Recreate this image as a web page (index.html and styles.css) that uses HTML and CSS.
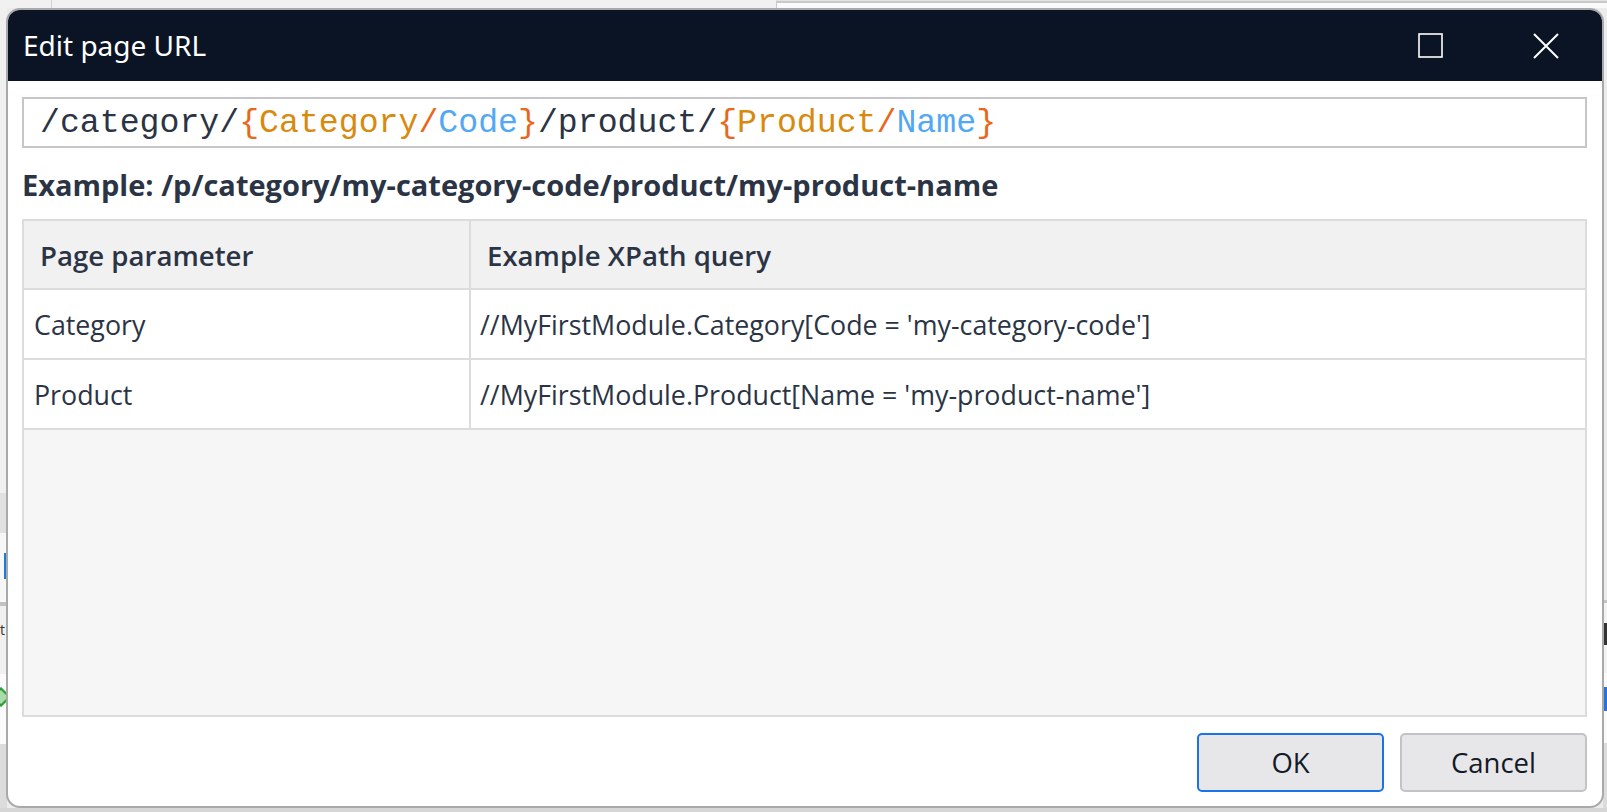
FILE: index.html
```html
<!DOCTYPE html>
<html>
<head>
<meta charset="utf-8">
<link rel="stylesheet" href="styles.css">
</head>
<body>
<div class="desktop">
  <div class="bg-top">
    <div class="bg-top-left"></div>
    <div class="bg-top-right"></div>
  </div>
  <div class="bg-mid">
    <div class="bg-left">
      <div class="seg s1"></div>
      <div class="seg s2"></div>
      <div class="seg s3"><span class="link-bit"></span></div>
      <div class="seg s4"></div>
      <div class="seg s5"><span class="t-bit">t</span></div>
      <div class="seg s6"><span class="green-bit"></span></div>
      <div class="seg s7"></div>
    </div>
    <div class="bg-center"></div>
    <div class="bg-right">
      <div class="seg r1"></div>
      <div class="seg r2"></div>
      <div class="seg r3"><span class="r-dark"></span></div>
      <div class="seg r4"><span class="r-blue"></span></div>
      <div class="seg r5"></div>
    </div>
  </div>
  <div class="bg-bottom"></div>

  <div class="dialog">
    <div class="titlebar">
      <div class="title">Edit page URL</div>
      <button class="tb-btn max" aria-label="Maximize">
        <svg width="25" height="25" viewBox="0 0 25 25"><rect x="1" y="1" width="23" height="23" fill="none" stroke="#fff" stroke-width="1.6"/></svg>
      </button>
      <button class="tb-btn close" aria-label="Close">
        <svg width="26" height="26" viewBox="0 0 26 26"><path d="M1 1 L25 25 M25 1 L1 25" stroke="#fff" stroke-width="2" fill="none"/></svg>
      </button>
    </div>
    <div class="content">
      <div class="url-input"><span class="c-plain">/category/</span><span class="c-brace">{</span><span class="c-ent">Category</span><span class="c-brace">/</span><span class="c-attr">Code</span><span class="c-brace">}</span><span class="c-plain">/product/</span><span class="c-brace">{</span><span class="c-ent">Product</span><span class="c-brace">/</span><span class="c-attr">Name</span><span class="c-brace">}</span></div>
      <div class="example">Example: /p/category/my-category-code/product/my-product-name</div>
      <div class="grid">
        <div class="row head">
          <div class="cell c1">Page parameter</div>
          <div class="cell c2">Example XPath query</div>
        </div>
        <div class="row">
          <div class="cell c1">Category</div>
          <div class="cell c2">//MyFirstModule.Category[Code = 'my-category-code']</div>
        </div>
        <div class="row">
          <div class="cell c1">Product</div>
          <div class="cell c2">//MyFirstModule.Product[Name = 'my-product-name']</div>
        </div>
      </div>
      <div class="footer">
        <button class="btn ok">OK</button>
        <button class="btn">Cancel</button>
      </div>
    </div>
  </div>
</div>
</body>
</html>
```

FILE: styles.css
```css
html, body {
  margin: 0;
  padding: 0;
}
body {
  width: 1607px;
  height: 812px;
  overflow: hidden;
  font-family: "Open Sans", "Noto Sans", sans-serif;
  background: #e2e2e2;
}
.desktop {
  position: relative;
  width: 1607px;
  height: 812px;
  display: flex;
  flex-direction: column;
}
.bg-top {
  height: 8px;
  display: flex;
}
.bg-top-left {
  width: 776px;
  background: #f1f1f1;
  background-image: linear-gradient(#d2d2d2, #d2d2d2);
  background-size: 1px 100%;
  background-repeat: no-repeat;
  background-position: 51px 0;
}
.bg-top-right {
  flex: 1;
  background: #fafafa;
  border-top: 2px solid #c9c9c9;
  border-left: 1px solid #c9c9c9;
  margin-top: 1px;
}
.bg-mid {
  flex: 1;
  display: flex;
}
.bg-left {
  width: 7px;
  display: flex;
  flex-direction: column;
  background: #e9e9e9;
}
.seg { overflow: hidden; position: relative; }
.s1 { height: 485px; background: #f0f0f0; }
.s2 { height: 40px; background: #e1e1e1; }
.s3 { height: 69px; background: #f7f7f7; }
.s4 { height: 4px; background: #c2c2c2; }
.s5 { height: 68px; background: #f0f0f0; }
.s6 { height: 70px; background: #fbfbfb; }
.s7 { flex: 1; background: #dcdcdc; }
.link-bit {
  display: block;
  margin: 20px 0 0 4px;
  width: 3px;
  height: 26px;
  background: #1d7ad6;
}
.t-bit {
  display: block;
  font-size: 14px;
  color: #333;
  margin: 14px 0 0 0;
  line-height: 20px;
}
.green-bit {
  display: block;
  width: 10px;
  height: 10px;
  margin: 16px 0 0 -6px;
  border: 2px solid #2d9e3a;
  background: #a8dca8;
  transform: rotate(45deg);
}
.bg-center { flex: 1; background: #ececec; }
.bg-right {
  width: 4px;
  display: flex;
  flex-direction: column;
  background: #e4e4e4;
}
.r1 { height: 592px; background: #ececec; }
.r2 { height: 3px; background: #c4c4c4; }
.r3 { height: 70px; background: #f2f2f2; }
.r4 { height: 70px; background: #fafafa; }
.r5 { flex: 1; background: #dcdcdc; }
.r-dark {
  display: block;
  margin: 20px 0 0 1px;
  width: 3px;
  height: 22px;
  background: #333;
}
.r-blue {
  display: block;
  margin: 14px 0 0 0;
  width: 4px;
  height: 24px;
  background: #2a74d8;
}
.bg-bottom { height: 4px; background: #d6d6d6; }

.dialog {
  position: absolute;
  left: 6px;
  top: 8px;
  width: 1598px;
  height: 800px;
  box-sizing: border-box;
  border: 2px solid #a9a9a9;
  border-radius: 14px;
  background: #fff;
  display: flex;
  flex-direction: column;
  overflow: hidden;
}
.titlebar {
  height: 71px;
  flex: none;
  background: #0b1425;
  display: flex;
  align-items: center;
  padding-left: 15px;
}
.title {
  flex: 1;
  color: #fff;
  font-family: "Noto Sans", "Open Sans", sans-serif;
  font-size: 28px;
  line-height: 1;
  padding-bottom: 2px;
}
.tb-btn {
  background: none;
  border: none;
  padding: 0;
  display: flex;
  align-items: center;
  justify-content: center;
}
.tb-btn.max { width: 25px; height: 25px; margin-right: 90px; }
.tb-btn.close { width: 26px; height: 26px; margin-right: 43px; }

.content {
  flex: 1;
  display: flex;
  flex-direction: column;
  padding: 16px 15px 14px 14px;
}
.url-input {
  height: 51px;
  box-sizing: border-box;
  border: 2px solid #c5c5ca;
  padding: 0 14px 0 16px;
  display: flex;
  align-items: center;
  font-family: "Liberation Mono", monospace;
  font-size: 33.2px;
  white-space: pre;
}
.c-plain { color: #2b3445; }
.c-brace { color: #e8671c; }
.c-ent { color: #d88a0e; }
.c-attr { color: #53a8f4; }

.example {
  margin-top: 20px;
  font-size: 29px;
  line-height: 34px;
  font-weight: 700;
  color: #2b3445;
}
.grid {
  margin-top: 17px;
  flex: 1;
  border: 2px solid #dcdcdc;
  background: #f6f6f6;
  display: flex;
  flex-direction: column;
}
.row {
  display: grid;
  grid-template-columns: 445px 1fr;
  height: 70px;
  box-sizing: border-box;
  border-bottom: 2px solid #dcdcdc;
  background: #fff;
  color: #2b3445;
  font-size: 26.8px;
}
.row.head {
  height: 69px;
  background: #f1f1f1;
  font-weight: 600;
  font-size: 27.6px;
}
.cell {
  display: flex;
  align-items: center;
  padding-left: 10px;
}
.cell.c2 {
  border-left: 2px solid #dcdcdc;
  padding-left: 9px;
}
.head .cell.c1 { padding-left: 16px; }
.head .cell.c2 { padding-left: 16px; }

.footer {
  margin-top: 16px;
  display: flex;
  justify-content: flex-end;
  gap: 16px;
}
.btn {
  width: 187px;
  height: 59px;
  box-sizing: border-box;
  border: 2px solid #c3c3c7;
  border-radius: 5px;
  background: #e7e7ea;
  font-family: "Open Sans", "Noto Sans", sans-serif;
  font-size: 27.5px;
  color: #141a26;
  padding: 0;
}
.btn.ok { border-color: #1a73e8; }
```
